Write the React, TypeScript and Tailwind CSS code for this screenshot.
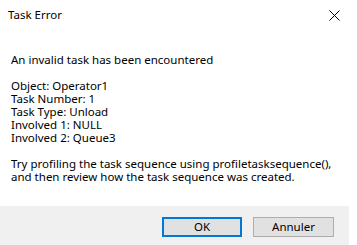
const lines = [
  'An invalid task has been encountered',
  '',
  'Object: Operator1',
  'Task Number: 1',
  'Task Type: Unload',
  'Involved 1: NULL',
  'Involved 2: Queue3',
  '',
  'Try profiling the task sequence using profiletasksequence(),',
  'and then review how the task sequence was created.',
]

export default function App() {
  return (
    <div
      className="flex h-[245px] w-[357px] bg-white text-[11.5px] text-black"
      style={{ fontFamily: '"Noto Sans", sans-serif' }}
    >
      <div className="flex w-[349px] flex-col">
        <div className="flex h-[30px] items-center justify-between pl-[8px] pr-[9px]">
          <span className="text-[11.5px]">Task Error</span>
          <svg width="11" height="11" viewBox="0 0 11 11" className="mt-[1px]">
            <path d="M0.5 0.5 L10.5 10.5 M10.5 0.5 L0.5 10.5" stroke="#000" strokeWidth="1" />
          </svg>
        </div>
        <div className="flex-1 pl-[11px] pt-[23px] leading-[13px]">
          {lines.map((l, i) => (
            <div key={i} className="h-[13px] whitespace-nowrap">
              {l}
            </div>
          ))}
        </div>
        <div className="flex h-[39px] items-start justify-end gap-[11px] bg-[#f0f0f0] pr-[15px] pt-[11px]">
          <button className="h-[20px] w-[80px] border-2 border-[#0078d7] bg-[#e1e1e1] text-[11.5px] leading-none">
            OK
          </button>
          <button className="h-[20px] w-[81px] border border-[#adadad] bg-[#e1e1e1] text-[11.5px] leading-none">
            Annuler
          </button>
        </div>
      </div>
    </div>
  )
}
